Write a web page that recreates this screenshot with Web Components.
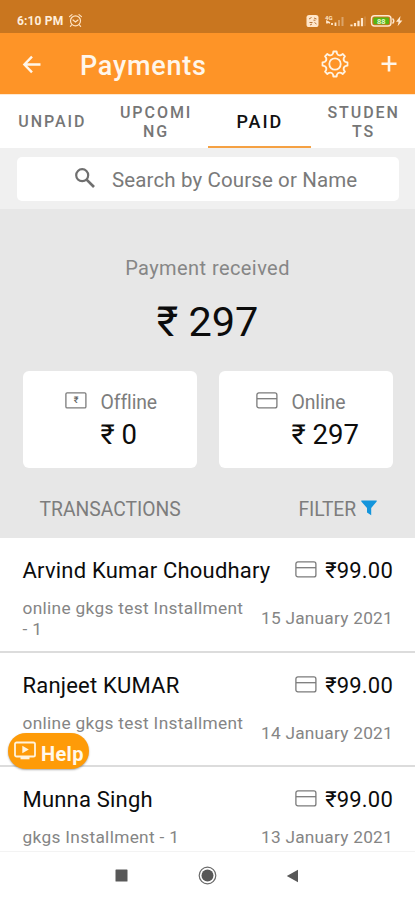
<!DOCTYPE html>
<html lang="en">
<head>
<meta charset="utf-8">
<title>Payments</title>
<style>
html,body{margin:0;height:100%;background:#fff;overflow:hidden}
body{font-family:Roboto,"Liberation Sans",sans-serif;color:#0c0c0c}
</style>
</head>
<body>
<payments-app></payments-app>
<script>
function define(name, html, setup) {
  const t = document.createElement('template');
  t.innerHTML = html;
  customElements.define(name, class extends HTMLElement {
    constructor() {
      super();
      this.attachShadow({mode: 'open'}).append(t.content.cloneNode(true));
    }
    connectedCallback() { if (setup) setup(this, this.shadowRoot); }
  });
}

/* Credit card outline */
define('card-icon', `
<style>:host{display:block;width:22px;height:17px}svg{display:block}</style>
<svg width="22" height="17" viewBox="0 0 22 17" fill="none" stroke="#7b7b7b" stroke-width="1.3">
<rect x=".9" y=".9" width="20" height="15" rx="2"/><path d="M1 6.7H21"/></svg>`);

/* Bank note with a rupee sign */
define('cash-icon', `
<style>:host{display:grid;width:22px;height:17px}svg,span{grid-area:1/1}
span{font-size:9px;line-height:17px;text-align:center;font-weight:500;color:#666}</style>
<svg width="22" height="17" viewBox="0 0 22 17" fill="none" stroke="#7b7b7b" stroke-width="1.3">
<rect x=".9" y=".9" width="20" height="15" rx="1.2"/></svg><span>₹</span>`);

define('status-bar', `
<style>
:host{display:flex;align-items:center;height:33px;background:#c9761f;box-sizing:border-box;padding:9px 11px 0 17px;color:#ffeedb}
b{font-size:12px;letter-spacing:.15px;line-height:14px;margin-right:5px}
.sp{flex:1}svg{display:block;margin-top:-1px}
</style>
<b>6:10 PM</b>
<svg width="15" height="15" viewBox="0 0 15 15" fill="none" stroke="#ffe3c2" stroke-width="1.2" stroke-linecap="round">
<circle cx="7.5" cy="7.8" r="5"/><path d="M1.5 3.6L4 1.6M13.5 3.6L11 1.6M5 7L7.5 9L10 7M3.5 12L2.4 13.4M11.5 12L12.6 13.4"/></svg>
<div class="sp"></div>
<svg width="98" height="16" viewBox="0 0 98 16">
<rect x=".5" y="2" width="12" height="12" rx="2.6" fill="#ffe6ca"/>
<path d="M3 6L5.5 4.5M8 5L10.5 6M3.5 9.5H6.5M8.5 9.5L10.5 11M4 12L6 11M7.5 7.2H9.5" stroke="#b87434" stroke-width="1"/>
<text x="19" y="6.5" font-size="6" font-weight="700" fill="#ffe6ca">4G</text>
<path d="M21 10.5V8.5L24 10M26 12V10M29.5 13V9.5" stroke="#ffe6ca" stroke-width="1.8" fill="none"/>
<path d="M33 13V7M36.5 13V4" stroke="#dba369" stroke-width="2"/>
<path d="M45.5 13.3V11.5M49 13.3V10M52.5 13.3V7.8M56 13.3V5" stroke="#ffe6ca" stroke-width="2.2"/>
<path d="M59 13V3.5" stroke="#d39858" stroke-width="1"/>
<rect x="65.5" y="2.8" width="19.5" height="10.2" rx="3" fill="none" stroke="#ffe9d0" stroke-width="1.4"/>
<rect x="67.5" y="4.6" width="15.5" height="6.6" rx="1" fill="#56b512"/>
<path d="M86.5 5.5Q89 8 86.5 10.5" stroke="#ffe9d0" stroke-width="1.5" fill="none"/>
<text x="71" y="10.6" font-size="7.4" font-weight="700" fill="#e5f5cf">88</text>
<path d="M94.5 3L90 8.8H92.6L91.6 13.2L96.4 7.4H93.8Z" fill="#ffe9d0"/>
</svg>`);

define('app-header', `
<style>
:host{display:flex;align-items:center;height:61px;background:#fe9427;box-sizing:border-box;padding:0 17.5px 0 22px}
h1{margin:4px 0 0 38px;font-size:27px;font-weight:500;line-height:32px;letter-spacing:.75px;color:#fff6ea;flex:1}
svg{display:block}.gear{margin-right:29.5px}
</style>
<svg width="20" height="20" viewBox="0 0 20 20" fill="none" stroke="#fff6ea" stroke-width="2.4"><path d="M18.5 10.5H2.6M10 2.7L2.4 10.5L10 18.3"/></svg>
<h1><slot></slot></h1>
<svg class="gear" width="30" height="30" viewBox="0 0 30 30" fill="none" stroke="#fff3e2" stroke-width="1.8" stroke-linejoin="round"><path id="g"/><circle cx="15" cy="15" r="5.7"/></svg>
<svg width="18" height="18" viewBox="0 0 18 18" stroke="#fff6ea" stroke-width="2.6"><path d="M1.5 8.7H16.5M9 1V16.5"/></svg>`,
(el, root) => {
  /* Eight rounded teeth: the outline alternates between an outer and an inner radius. */
  const pt = (r, a) => (15 + r * Math.sin(a * Math.PI / 180)).toFixed(2) + ' ' + (15 - r * Math.cos(a * Math.PI / 180)).toFixed(2);
  let d = '';
  for (let i = 0; i < 8; i++) {
    const a = i * 45;
    d += (i ? 'L' : 'M') + pt(12.6, a - 7.5) + 'L' + pt(12.6, a + 7.5) +
         'L' + pt(10.6, a + 11) + 'Q' + pt(8.7, a + 22.5) + ' ' + pt(10.6, a + 34);
  }
  root.getElementById('g').setAttribute('d', d + 'Z');
});

define('tab-item', `
<style>
:host{display:flex;align-items:center;justify-content:center;box-sizing:border-box;width:104px;height:54px;padding:2px 14px 2px 15px;
font-size:16px;font-weight:500;line-height:19.3px;letter-spacing:1.95px;color:#767676;text-align:center;word-break:break-all}
:host([active]){font-size:18px;letter-spacing:2px;color:#111;border-bottom:3px solid #f5a143;padding-bottom:0}
</style><span><slot></slot></span>`);

define('tab-bar', `
<style>:host{display:flex;height:54px;background:#fff;border-top:1px solid #ffe9d1;box-sizing:border-box}</style><slot></slot>`);

define('search-box', `
<style>
:host{display:block;height:61px;background:#f0f0f0;box-sizing:border-box;padding:8.5px 16px 0 17px}
div{display:flex;align-items:center;height:44.5px;background:#fff;border-radius:5px;padding-left:57px;gap:16px;
font-size:20.5px;letter-spacing:.12px;color:#7a7a7a;line-height:24px}
svg{display:block;margin-top:-2px}span{padding-top:2px}
</style>
<div><svg width="22" height="22" viewBox="0 0 22 22" fill="none" stroke="#6f6f6f"><circle cx="8.2" cy="8.2" r="6" stroke-width="2.2"/><path d="M12.6 12.6L20 20" stroke-width="2.7"/></svg><span><slot></slot></span></div>`);

define('amount-card', `
<style>
:host{display:flex;width:174px;height:97px;background:#fff;border-radius:6px;box-sizing:border-box;padding-top:18px}
.i{padding-top:3px}
.l{font-size:19.4px;line-height:28px;color:#7d7d7d;letter-spacing:-.1px}
.v{font-size:27.5px;line-height:32px;margin-top:2px}
.t{margin-left:13.5px}
</style>
<div class="i"><slot name="icon"></slot></div>
<div class="t"><div class="l"><slot name="label"></slot></div><div class="v"><slot></slot></div></div>`);

define('payment-summary', `
<style>
:host{display:block;height:329px;background:#e7e7e7;box-sizing:border-box;padding-top:46px}
.c{text-align:center}
.a{font-size:20px;line-height:26px;letter-spacing:.42px;color:#868686}
.b{font-size:41.5px;line-height:50px;padding-top:16px}
.cards{display:flex;gap:22px;padding:24px 0 0 23px}
.f{display:flex;align-items:center;justify-content:space-between;font-size:19.3px;line-height:24px;color:#7d7d7d;padding:29.5px 38px 0 39.5px}
.f span{display:flex;align-items:center;gap:5px;letter-spacing:-.1px}
.one{padding-left:42px}.two{padding-left:37px}
svg{display:block;margin-top:-3px}
</style>
<div class="c a">Payment received</div>
<div class="c b">₹ 297</div>
<div class="cards">
<amount-card class="one"><cash-icon slot="icon"></cash-icon><span slot="label">Offline</span>₹ 0</amount-card>
<amount-card class="two"><card-icon slot="icon"></card-icon><span slot="label">Online</span>₹ 297</amount-card>
</div>
<div class="f"><div>TRANSACTIONS</div><span>FILTER <svg width="16" height="16" viewBox="0 0 16 16"><path d="M.3.5H15.7V1.6L10.2 8V15.3L6 12.6V8L.3 1.6Z" fill="#1495dc"/></svg></span></div>`);

define('payment-row', `
<style>
:host{display:block;height:114.5px;box-sizing:border-box;padding:20px 22px 0 22.5px;border-bottom:2px solid #dcdcdc}
.r{display:flex;justify-content:space-between;align-items:center;font-size:22px;line-height:26px;letter-spacing:.2px}
.p{display:flex;align-items:center;gap:8px;letter-spacing:.2px}
.p card-icon{margin-top:-3px}
.s{display:flex;justify-content:space-between;align-items:center;font-size:17.3px;line-height:20.5px;letter-spacing:.32px;color:#858585;margin-top:14px}
.d{width:226px}
.t{letter-spacing:.24px}
:host([tall]) .d{min-height:41px}
</style>
<div class="r"><span><slot name="name"></slot></span><span class="p"><card-icon></card-icon><span><slot name="amount"></slot></span></span></div>
<div class="s"><div class="d"><slot name="detail"></slot></div><div class="t"><slot name="date"></slot></div></div>`);

define('help-button', `
<style>
:host{position:absolute;left:8px;top:733px;width:81px;height:36px;box-sizing:border-box;border-radius:18px;background:#fe9b08;
display:flex;align-items:center;padding-left:6px;gap:5px;color:#fff8ec;font-size:20px;font-weight:700;line-height:24px;letter-spacing:.35px;box-shadow:0 1px 2px #0005}
span{padding-top:5px}svg{display:block}
</style>
<svg width="22" height="20" viewBox="0 0 22 20"><rect x="1" y="1.5" width="20" height="14" rx="1.6" fill="none" stroke="#fff3dc" stroke-width="1.8"/><path d="M6.5 15.5H15.5V18.3H6.5Z" fill="#fff3dc"/><path d="M8.3 4.8L14.8 8.5L8.3 12.2Z" fill="#fff3dc"/></svg>
<span><slot></slot></span>`);

define('nav-bar', `
<style>:host{display:flex;align-items:center;height:49px;box-sizing:border-box;background:#fff;border-top:1px solid #f3f3f3;padding:0 116px 1px 115px;justify-content:space-between;position:relative}svg{display:block}</style>
<svg width="13" height="13" viewBox="0 0 13 13"><rect x=".5" y=".5" width="12" height="12" rx=".6" fill="#585858"/></svg>
<svg width="19" height="19" viewBox="0 0 19 19"><circle cx="9.5" cy="9.5" r="8.3" fill="none" stroke="#6a6a6a" stroke-width="1.2"/><circle cx="9.5" cy="9.5" r="6" fill="#585858"/></svg>
<svg width="13" height="14" viewBox="0 0 13 14"><path d="M.8 7L12 .7V13.3Z" fill="#585858"/></svg>`);

define('payments-app', `
<style>
:host{display:flex;flex-direction:column;height:900px;width:415px;overflow:hidden;position:relative;background:#fff}
.list{height:313px;overflow:hidden}
</style>
<status-bar></status-bar>
<app-header>Payments</app-header>
<tab-bar><tab-item>UNPAID</tab-item><tab-item>UPCOMING</tab-item><tab-item active>PAID</tab-item><tab-item>STUDENTS</tab-item></tab-bar>
<search-box>Search by Course or Name</search-box>
<payment-summary></payment-summary>
<div class="list">
<payment-row tall><span slot="name">Arvind Kumar Choudhary</span><span slot="amount">₹99.00</span><span slot="detail">online gkgs test Installment - 1</span><span slot="date">15 January 2021</span></payment-row>
<payment-row tall><span slot="name">Ranjeet KUMAR</span><span slot="amount">₹99.00</span><span slot="detail">online gkgs test Installment</span><span slot="date">14 January 2021</span></payment-row>
<payment-row><span slot="name">Munna Singh</span><span slot="amount">₹99.00</span><span slot="detail">gkgs Installment - 1</span><span slot="date">13 January 2021</span></payment-row>
</div>
<nav-bar></nav-bar>
<help-button>Help</help-button>`);
</script>
</body>
</html>
